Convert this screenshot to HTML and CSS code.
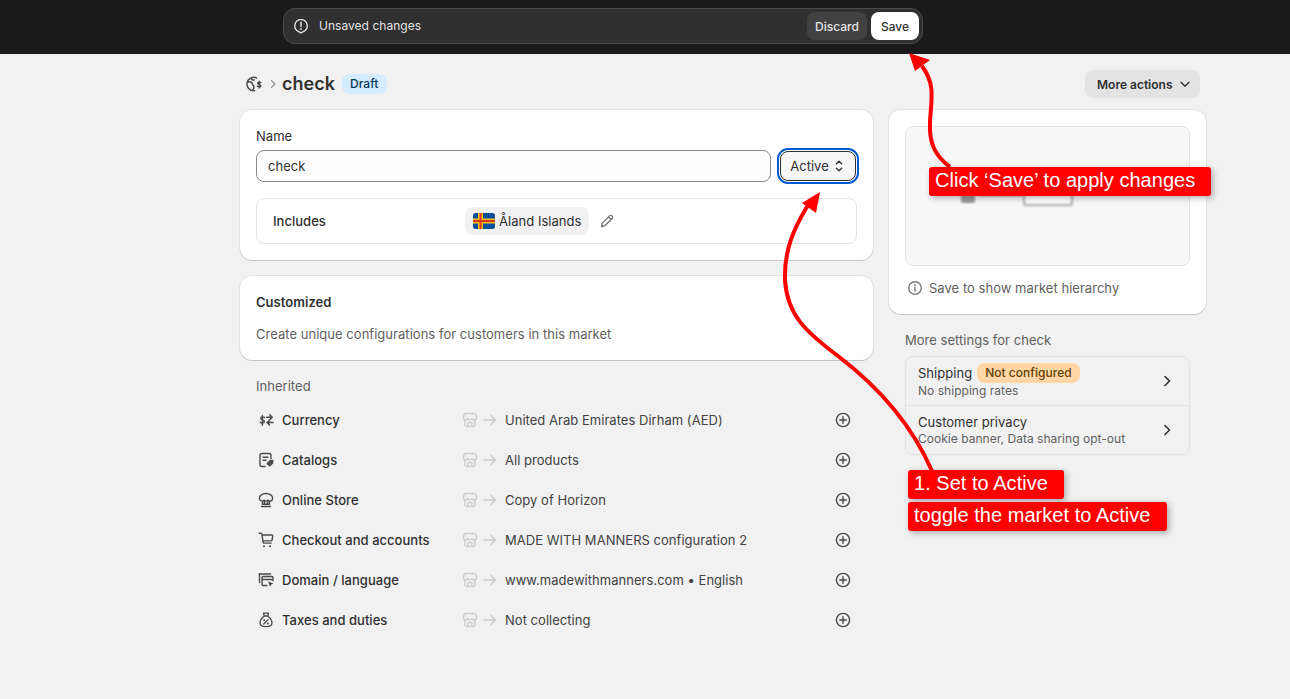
FILE: index.html
```html
<!DOCTYPE html>
<html lang="en">
  <head>
    <meta charset="UTF-8" />
    <meta name="viewport" content="width=device-width, initial-scale=1.0" />
    <title>check</title>
    <link rel="stylesheet" href="styles.css" />
  </head>
  <body>
    <svg class="defs" width="0" height="0">
      <symbol id="store" viewBox="0 0 16 16">
        <path d="M4.500 1.500h7c1.800 0 3 1.700 3 3.700 0 1.500-1 2.600-2.300 2.600-.9 0-1.700-.5-2.100-1.200-.4.700-1.200 1.200-2.100 1.200s-1.700-.5-2.100-1.200c-.4.700-1.200 1.200-2.100 1.200-1.300 0-2.300-1.100-2.300-2.600 0-2 1.200-3.700 3-3.700z" fill="none" stroke="currentColor" stroke-width="1.500" stroke-linejoin="round" />
        <path d="M3 8v5a1.500 1.500 0 0 0 1.500 1.500h7A1.500 1.500 0 0 0 13 13V8M6 14.500v-4h4v4" fill="none" stroke="currentColor" stroke-width="1.500" stroke-linejoin="round" />
      </symbol>
      <symbol id="arrow" viewBox="0 0 16 16">
        <path d="M2 8h11.500M9 3.500 13.500 8 9 12.500" fill="none" stroke="currentColor" stroke-width="1.400" stroke-linecap="round" stroke-linejoin="round" />
      </symbol>
      <symbol id="plus" viewBox="0 0 16 16">
        <circle cx="8" cy="8" r="6.600" fill="none" stroke="currentColor" stroke-width="1.400" />
        <path d="M8 4.800v6.400M4.800 8h6.400" fill="none" stroke="currentColor" stroke-width="1.400" stroke-linecap="round" />
      </symbol>
      <symbol id="chev" viewBox="0 0 16 16">
        <path d="M6 3.500 10.500 8 6 12.500" fill="none" stroke="currentColor" stroke-width="1.600" stroke-linecap="round" stroke-linejoin="round" />
      </symbol>
    </svg>

    <!-- TOP BAR -->
    <header class="topbar">
      <div class="save-bar">
        <svg class="save-icon" viewBox="0 0 16 16" width="16" height="16">
          <path d="M8 1.600a6.200 6.200 0 0 1 2.200 12l-2.200 1.400-2.200-1.400A6.200 6.200 0 0 1 8 1.600z" fill="none" stroke="#e3e3e3" stroke-width="1.400" stroke-linejoin="round" />
          <path d="M8 4.600v4" stroke="#e3e3e3" stroke-width="1.500" stroke-linecap="round" />
          <circle cx="8" cy="11" r=".9" fill="#e3e3e3" />
        </svg>
        <span class="save-text">Unsaved changes</span>
        <button class="btn-discard">Discard</button>
        <button class="btn-save">Save</button>
      </div>
    </header>

    <div class="page">
      <!-- TITLE ROW -->
      <div class="title-row">
        <svg class="globe" viewBox="0 0 16 16" width="16" height="16">
          <path d="M10.500 2A6.700 6.700 0 1 0 8.600 14.700" fill="none" stroke="#4a4a4a" stroke-width="1.500" stroke-linecap="round" />
          <path d="M1.800 6c2.400-.8 4.200.2 4.600 2 .3 1.400 1.500 1.300 1.500 3 0 1.200-.5 2.200-1.100 3M5 2.200c.3 1.500 1.700 2 3.600 1.600" fill="none" stroke="#4a4a4a" stroke-width="1.500" />
          <path d="M14.800 6.800c-.6-.9-3-.9-3.200.4-.2 1.600 3.400 1 3.300 2.700-.1 1.400-2.800 1.400-3.600.3M13.200 5.200v6.800" fill="none" stroke="#4a4a4a" stroke-width="1.300" stroke-linecap="round" />
        </svg>
        <svg class="crumb" viewBox="0 0 16 16" width="12" height="12"><use href="#chev" /></svg>
        <h1 class="title">check</h1>
        <span class="badge-draft">Draft</span>
        <button class="btn-more">
          More actions
          <svg viewBox="0 0 16 16" width="14" height="14">
            <path d="M3.500 6 8 10.500 12.500 6" fill="none" stroke="#303030" stroke-width="1.500" stroke-linecap="round" stroke-linejoin="round" />
          </svg>
        </button>
      </div>

      <div class="columns">
        <!-- MAIN COLUMN -->
        <main class="col-main">
          <section class="card card-name">
            <div class="field-label">Name</div>
            <div class="name-row">
              <div class="name-input">check</div>
              <div class="status-select">
                Active
                <svg viewBox="0 0 16 16" width="14" height="16">
                  <path d="M5 5.500 8 2.500 11 5.500M5 10.500 8 13.500 11 10.500" fill="none" stroke="#303030" stroke-width="1.500" stroke-linecap="round" stroke-linejoin="round" />
                </svg>
              </div>
            </div>
            <div class="includes">
              <span class="includes-label">Includes</span>
              <span class="chip">
                <svg class="flag" viewBox="0 0 22 16" width="22" height="16">
                  <rect width="22" height="16" rx="2.500" fill="#0b4f9e" />
                  <path d="M0 8h22M7.500 0v16" stroke="#f5c400" stroke-width="5" />
                  <path d="M0 8h22M7.500 0v16" stroke="#d8322a" stroke-width="2" />
                </svg>
                Åland Islands
              </span>
              <svg class="pencil" viewBox="0 0 16 16" width="16" height="16">
                <path d="M2.500 13.500l.8-3.400 7.200-7.200a1.800 1.800 0 0 1 2.600 2.600l-7.200 7.200zM9.500 4l2.500 2.500" fill="none" stroke="#707070" stroke-width="1.300" stroke-linejoin="round" />
              </svg>
            </div>
          </section>

          <section class="card card-custom">
            <h2 class="card-title">Customized</h2>
            <p class="card-sub">Create unique configurations for customers in this market</p>
          </section>

          <section class="inherited">
            <div class="inherited-title">Inherited</div>

            <div class="row">
              <svg class="row-icon" viewBox="0 0 16 16">
                <path d="M6 4.600C5.500 3.700 2.500 3.500 2.300 5.300 2.100 7.300 6.200 6.700 6 8.800 5.800 10.600 2.600 10.500 1.800 9.200M4 2.400v9.800" fill="none" stroke="#4a4a4a" stroke-width="1.400" stroke-linecap="round" transform="translate(.4 1)" />
                <path d="M8.500 5.200h5.500M11.800 2.800l2.400 2.400-2.400 2.400M15 10.500H9.300M11.500 8.200l-2.400 2.400 2.400 2.400" fill="none" stroke="#4a4a4a" stroke-width="1.500" stroke-linecap="round" stroke-linejoin="round" />
              </svg>
              <span class="row-label">Currency</span>
              <svg class="row-store"><use href="#store" /></svg>
              <svg class="row-arrow"><use href="#arrow" /></svg>
              <span class="row-value">United Arab Emirates Dirham (AED)</span>
              <svg class="row-plus"><use href="#plus" /></svg>
            </div>

            <div class="row">
              <svg class="row-icon" viewBox="0 0 16 16">
                <path d="M7 14.500H4a2 2 0 0 1-2-2v-9a2 2 0 0 1 2-2h7a2 2 0 0 1 2 2v3M5 5.200h5M5 8.200h3" fill="none" stroke="#4a4a4a" stroke-width="1.400" stroke-linecap="round" />
                <path d="M9 10.800l3-3h3.400v3.400l-3 3a1 1 0 0 1-1.400 0L9 12.200a1 1 0 0 1 0-1.400z" fill="#4a4a4a" />
              </svg>
              <span class="row-label">Catalogs</span>
              <svg class="row-store"><use href="#store" /></svg>
              <svg class="row-arrow"><use href="#arrow" /></svg>
              <span class="row-value">All products</span>
              <svg class="row-plus"><use href="#plus" /></svg>
            </div>

            <div class="row">
              <svg class="row-icon" viewBox="0 0 16 16">
                <path d="M8 1.500c3.800 0 6.600 2.200 6.600 4.700 0 1.600-1.300 2.900-2.700 2.900-.9 0-1.500-.4-2-1-.4.600-1.100 1-1.900 1s-1.500-.4-1.900-1c-.5.600-1.100 1-2 1-1.400 0-2.700-1.300-2.700-2.900 0-2.500 2.800-4.700 6.600-4.700z" fill="none" stroke="#4a4a4a" stroke-width="1.400" stroke-linejoin="round" />
                <path d="M4.500 9.500v2.700h7V9.500M3.500 14.500h9M6.500 9v3M9.500 9v3" fill="none" stroke="#4a4a4a" stroke-width="1.400" stroke-linecap="round" />
              </svg>
              <span class="row-label">Online Store</span>
              <svg class="row-store"><use href="#store" /></svg>
              <svg class="row-arrow"><use href="#arrow" /></svg>
              <span class="row-value">Copy of Horizon</span>
              <svg class="row-plus"><use href="#plus" /></svg>
            </div>

            <div class="row">
              <svg class="row-icon" viewBox="0 0 16 16">
                <path d="M1.200 1.300h1.700c.6 0 1 .4 1.100 1l1 7.800c.1.600.5 1 1.100 1h7.100M4 3h9.800c.6 0 1 .5.900 1.100l-.7 4c-.1.500-.5.800-1 .8H4.800" fill="none" stroke="#4a4a4a" stroke-width="1.400" stroke-linecap="round" stroke-linejoin="round" />
                <circle cx="6" cy="14.200" r="1" fill="#4a4a4a" />
                <circle cx="12" cy="14.200" r="1" fill="#4a4a4a" />
              </svg>
              <span class="row-label">Checkout and accounts</span>
              <svg class="row-store"><use href="#store" /></svg>
              <svg class="row-arrow"><use href="#arrow" /></svg>
              <span class="row-value">MADE WITH MANNERS configuration 2</span>
              <svg class="row-plus"><use href="#plus" /></svg>
            </div>

            <div class="row">
              <svg class="row-icon" viewBox="0 0 16 16">
                <path d="M1 2h11.500M1.500 2v8.500" fill="none" stroke="#4a4a4a" stroke-width="1.400" stroke-linecap="round" />
                <path d="M9 13.500H5.200A1.200 1.200 0 0 1 4 12.300V5.700a1.200 1.200 0 0 1 1.200-1.200h8.600A1.200 1.200 0 0 1 15 5.700v3M4 7.500h11" fill="none" stroke="#4a4a4a" stroke-width="1.400" stroke-linecap="round" />
                <path d="M10 9.500l5.500 2-2.300 1-1 2.300z" fill="#4a4a4a" />
              </svg>
              <span class="row-label">Domain / language</span>
              <svg class="row-store"><use href="#store" /></svg>
              <svg class="row-arrow"><use href="#arrow" /></svg>
              <span class="row-value">www.madewithmanners.com • English</span>
              <svg class="row-plus"><use href="#plus" /></svg>
            </div>

            <div class="row">
              <svg class="row-icon" viewBox="0 0 16 16">
                <path d="M5.500 1.200h5L9.800 4H6.200zM6.200 4.200C3.600 6 2 8.200 2 10.800c0 2.400 1.800 3.900 6 3.900s6-1.500 6-3.900c0-2.600-1.600-4.800-4.200-6.600" fill="none" stroke="#4a4a4a" stroke-width="1.300" stroke-linejoin="round" />
                <path d="M5.800 12 10.200 7.600" stroke="#4a4a4a" stroke-width="1.300" stroke-linecap="round" />
                <circle cx="6.200" cy="8.200" r="1" fill="#4a4a4a" />
                <circle cx="9.800" cy="11.500" r="1" fill="#4a4a4a" />
              </svg>
              <span class="row-label">Taxes and duties</span>
              <svg class="row-store"><use href="#store" /></svg>
              <svg class="row-arrow"><use href="#arrow" /></svg>
              <span class="row-value">Not collecting</span>
              <svg class="row-plus"><use href="#plus" /></svg>
            </div>
          </section>
        </main>

        <!-- SIDE COLUMN -->
        <aside class="col-side">
          <section class="card card-preview">
            <div class="preview">
              <span class="node node-dot"></span>
              <span class="node node-line"></span>
              <span class="node node-box"></span>
            </div>
            <div class="preview-note">
              <svg viewBox="0 0 16 16" width="16" height="16">
                <circle cx="8" cy="8" r="6.300" fill="none" stroke="#7a7a7a" stroke-width="1.400" />
                <path d="M8 7.500v3.600" stroke="#7a7a7a" stroke-width="1.500" stroke-linecap="round" />
                <circle cx="8" cy="5" r=".9" fill="#7a7a7a" />
              </svg>
              Save to show market hierarchy
            </div>
          </section>

          <div class="more-title">More settings for check</div>
          <div class="settings">
            <div class="setting">
              <div class="setting-text">
                <div class="setting-name">Shipping <span class="badge-warn">Not configured</span></div>
                <div class="setting-sub">No shipping rates</div>
              </div>
              <svg class="setting-chev"><use href="#chev" /></svg>
            </div>
            <div class="setting">
              <div class="setting-text">
                <div class="setting-name">Customer privacy</div>
                <div class="setting-sub">Cookie banner, Data sharing opt-out</div>
              </div>
              <svg class="setting-chev"><use href="#chev" /></svg>
            </div>
          </div>
        </aside>
      </div>
    </div>

    <!-- ANNOTATIONS -->
    <svg class="arrows" viewBox="0 0 1290 699" width="1290" height="699">
      <path d="M932 471C912 425 880 388 838 356 806 332 787 315 785 280 784 250 794 228 808 205" fill="none" stroke="#ff0000" stroke-width="4" />
      <path d="M820 192 802 203 816 213z" fill="#ff0000" />
      <path d="M950 167C934 155 929 142 930 122 931 100 936 85 922 66" fill="none" stroke="#ff0000" stroke-width="4" />
      <path d="M909 53 930 60 915 71z" fill="#ff0000" />
    </svg>
    <div class="note note-save">Click ‘Save’ to apply changes</div>
    <div class="note note-step">1. Set to Active</div>
    <div class="note note-toggle">toggle the market to Active</div>
  </body>
</html>
```

FILE: styles.css
```css
* {
  box-sizing: border-box;
  margin: 0;
  padding: 0;
}

html,
body {
  height: 699px;
  overflow: hidden;
}

body {
  background: #f1f1f1;
  color: #303030;
  font-family: Inter, "Liberation Sans", sans-serif;
  font-size: 13px;
  letter-spacing: 0.03px;
  line-height: 20px;
  position: relative;
}

button {
  border: 0;
  font-family: inherit;
}

svg {
  display: block;
  flex-shrink: 0;
}

.defs {
  position: absolute;
}

/* TOP BAR */

.topbar {
  height: 54px;
  background: #1a1a1a;
  padding: 8px 0 0 283px;
}

.save-bar {
  width: 640px;
  height: 36px;
  display: flex;
  align-items: center;
  padding: 0 3px 0 9px;
  background: #303030;
  border: 1px solid #4a4a4a;
  border-radius: 12px;
}

.save-text {
  flex: 1;
  margin-left: 10px;
  color: #e3e3e3;
  font-size: 12px;
}

.btn-discard {
  width: 60px;
  height: 28px;
  margin-right: 4px;
  background: #424242;
  color: #e3e3e3;
  border-radius: 8px;
  font-size: 12px;
  font-weight: 550;
}

.btn-save {
  width: 48px;
  height: 28px;
  background: #fff;
  color: #303030;
  border-radius: 8px;
  font-size: 12px;
  font-weight: 550;
}

/* PAGE */

.page {
  width: 966px;
  margin-left: 240px;
}

.title-row {
  height: 56px;
  display: flex;
  align-items: center;
  padding: 4px 6px 0;
}

.crumb {
  margin-left: 5px;
  color: #8a8a8a;
}

.title {
  margin-left: 3px;
  font-size: 18px;
  font-weight: 600;
  line-height: 24px;
}

.badge-draft {
  margin-left: 7px;
  padding: 0 9px 0 8px;
  height: 20px;
  background: #d5ebff;
  color: #003a5a;
  border-radius: 8px;
  font-size: 12px;
  font-weight: 550;
}

.btn-more {
  margin-left: auto;
  width: 115px;
  height: 28px;
  display: flex;
  align-items: center;
  gap: 5px;
  padding-left: 12px;
  background: #e3e3e3;
  color: #303030;
  border-radius: 8px;
  font-size: 12px;
  font-weight: 600;
}

.columns {
  display: flex;
  gap: 16px;
  align-items: flex-start;
}

.col-main {
  width: 633px;
}

.col-side {
  width: 317px;
}

.card {
  background: #fff;
  border-radius: 12px;
  box-shadow: 0 1px 0 rgba(0, 0, 0, 0.12), 0 0 0 1px rgba(0, 0, 0, 0.06);
  padding: 16px;
}

/* NAME CARD */

.card-name {
  height: 150px;
}

.field-label {
  height: 20px;
}

.name-row {
  display: flex;
  align-items: center;
  gap: 9px;
  margin-top: 4px;
}

.name-input {
  width: 515px;
  height: 32px;
  padding: 0 11px;
  line-height: 31px;
  background: #fdfdfd;
  border: 1px solid #8a8a8a;
  border-radius: 8px;
}

.status-select {
  width: 76px;
  height: 30px;
  display: flex;
  align-items: center;
  justify-content: center;
  gap: 3px;
  background: #f7f7f7;
  border: 1px solid #303030;
  border-radius: 8px;
  outline: 2px solid #005bd3;
  outline-offset: 1px;
}

.includes {
  height: 46px;
  margin-top: 16px;
  display: flex;
  align-items: center;
  padding-left: 16px;
  border: 1px solid #e3e3e3;
  border-radius: 8px;
}

.includes-label {
  width: 192px;
  font-weight: 500;
}

.chip {
  height: 28px;
  display: flex;
  align-items: center;
  gap: 4px;
  padding: 0 8px;
  background: #f1f1f1;
  border-radius: 8px;
}

.pencil {
  margin-left: 10px;
}

/* CUSTOMIZED */

.card-custom {
  height: 84px;
  margin-top: 16px;
}

.card-title {
  font-size: 13px;
  font-weight: 600;
}

.card-sub {
  margin-top: 12px;
  color: #616161;
}

/* INHERITED */

.inherited {
  padding: 16px 16px 0;
}

.inherited-title {
  color: #616161;
}

.row {
  height: 40px;
  display: flex;
  align-items: center;
}

.inherited-title + .row {
  margin-top: 4px;
}

.row-icon {
  width: 16px;
  height: 16px;
  margin-left: 2px;
}

.row-label {
  width: 180px;
  margin-left: 8px;
  font-weight: 550;
}

.row-store {
  width: 16px;
  height: 16px;
  color: #cfcfcf;
}

.row-arrow {
  width: 16px;
  height: 16px;
  margin-left: 4px;
  color: #c9c9c9;
}

.row-value {
  flex: 1;
  margin-left: 7px;
  color: #424242;
}

.row-plus {
  width: 16px;
  height: 16px;
  margin-right: 6px;
  color: #4a4a4a;
}

/* SIDE */

.card-preview {
  height: 204px;
}

.preview {
  height: 140px;
  position: relative;
  background: #f7f7f7;
  border: 1px solid #e3e3e3;
  border-radius: 8px;
}

.node {
  position: absolute;
  filter: blur(1px);
}

.node-dot {
  left: 55px;
  top: 64px;
  width: 14px;
  height: 12px;
  background: #9a9a9a;
  border-radius: 2px;
}

.node-line {
  left: 72px;
  top: 66px;
  width: 46px;
  height: 3px;
  background: #a0a0a0;
}

.node-box {
  left: 117px;
  top: 60px;
  width: 50px;
  height: 19px;
  background: #fff;
  border: 2px solid #aaa;
  border-radius: 3px;
}

.preview-note {
  display: flex;
  align-items: center;
  gap: 6px;
  margin-top: 12px;
  padding-left: 2px;
  color: #616161;
}

.more-title {
  margin: 16px 0 6px 16px;
  color: #616161;
}

.settings {
  width: 285px;
  margin-left: 16px;
  border: 1px solid #e3e3e3;
  border-radius: 8px;
}

.setting {
  height: 48px;
  display: flex;
  align-items: center;
  padding: 0 14px 0 12px;
}

.setting + .setting {
  height: 49px;
  border-top: 1px solid #e3e3e3;
}

.setting-text {
  flex: 1;
}

.setting-name {
  display: flex;
  align-items: center;
  gap: 5px;
  line-height: 17px;
}

.setting-sub {
  color: #616161;
  font-size: 12px;
  line-height: 16px;
}

.badge-warn {
  height: 20px;
  padding: 0 8px;
  background: #ffd6a4;
  color: #5e4200;
  border-radius: 8px;
  font-size: 12px;
  font-weight: 550;
  line-height: 20px;
}

.setting-chev {
  width: 16px;
  height: 16px;
  color: #303030;
}

/* ANNOTATIONS */

.arrows {
  position: absolute;
  left: 0;
  top: 0;
  pointer-events: none;
}

.note {
  position: absolute;
  height: 29px;
  padding: 0 6px;
  background: #ff0000;
  color: #fff;
  border-radius: 3px;
  box-shadow: 2px 2px 6px rgba(0, 0, 0, 0.3);
  font-family: "Liberation Sans", Arial, sans-serif;
  font-size: 20px;
  line-height: 27px;
}

.note-save {
  left: 929px;
  top: 167px;
  width: 282px;
}

.note-step {
  left: 908px;
  top: 470px;
  width: 156px;
}

.note-toggle {
  left: 908px;
  top: 502px;
  width: 259px;
}
```
